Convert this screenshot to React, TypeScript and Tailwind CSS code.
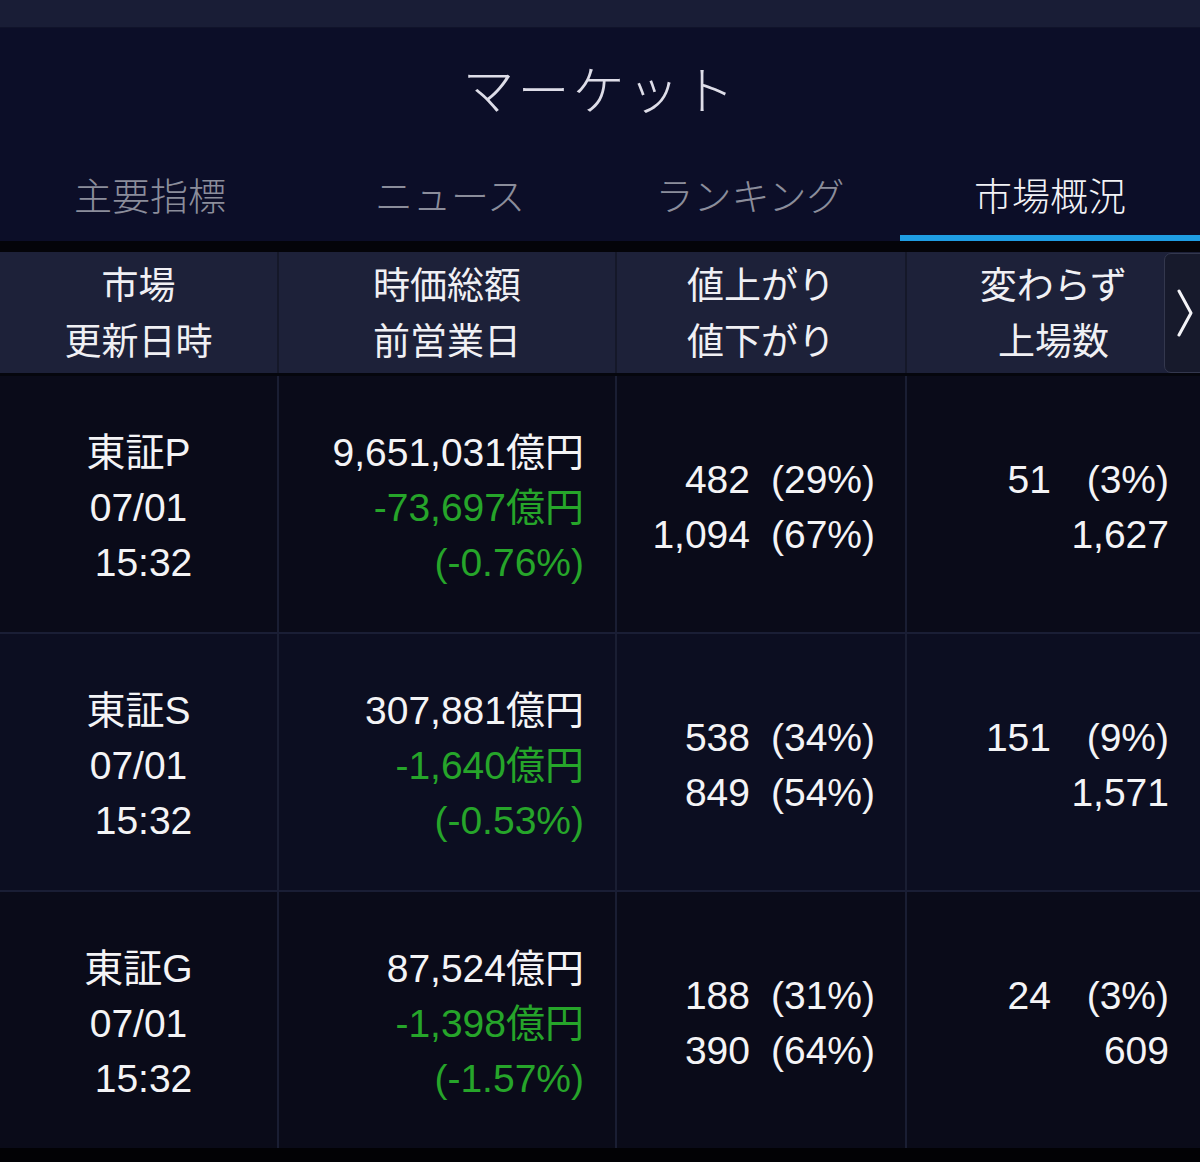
import React from 'react';

const jp = { fontFamily: '"Noto Sans CJK JP", sans-serif' };
const num = { fontFamily: '"Liberation Sans", "Noto Sans CJK JP", sans-serif' };

const tabs = ['主要指標', 'ニュース', 'ランキング', '市場概況'];

const rows = [
  {
    name: '東証P',
    cap: '9,651,031億円',
    diff: '-73,697億円',
    pct: '(-0.76%)',
    up: ['482', '(29%)'],
    down: ['1,094', '(67%)'],
    flat: ['51', '(3%)'],
    listed: '1,627',
    bg: 'bg-[#0a0b19]',
  },
  {
    name: '東証S',
    cap: '307,881億円',
    diff: '-1,640億円',
    pct: '(-0.53%)',
    up: ['538', '(34%)'],
    down: ['849', '(54%)'],
    flat: ['151', '(9%)'],
    listed: '1,571',
    bg: 'bg-[#0c0e21]',
  },
  {
    name: '東証G',
    cap: '87,524億円',
    diff: '-1,398億円',
    pct: '(-1.57%)',
    up: ['188', '(31%)'],
    down: ['390', '(64%)'],
    flat: ['24', '(3%)'],
    listed: '609',
    bg: 'bg-[#0a0b19]',
  },
];

const App: React.FC = () => {
  return (
    <div className="w-[1200px] h-[1162px] bg-black overflow-hidden flex flex-col">
      {/* status strip */}
      <div className="h-[28px] bg-[#191d36] border-b border-[#10132a]" />

      {/* title + tabs */}
      <div className="bg-[#0c0e28]">
        <div className="h-[120px] flex items-center justify-center">
          <h1 className="text-[52px] font-light tracking-[3px] text-[#dedde8]" style={jp}>
            マーケット
          </h1>
        </div>
        <div className="grid grid-cols-4 h-[93px]">
          {tabs.map((t, i) => (
            <div key={t} className="flex flex-col">
              <div
                className={`flex-1 flex items-center justify-center pt-[4px] text-[38px] font-light ${
                  i === 3 ? 'text-[#f2f2f6]' : 'text-[#8b8d9b]'
                }`}
                style={jp}
              >
                {t}
              </div>
              <div className={`h-[6px] ${i === 3 ? 'bg-[#1f9de3]' : 'bg-[#0c0e28]'}`} />
            </div>
          ))}
        </div>
      </div>

      <div className="h-[11px] bg-[#040409]" />

      {/* column header */}
      <div className="relative h-[121px] bg-[#1d2139] grid grid-cols-[279px_338px_290px_293px] text-[37px] text-[#f0f0f4] leading-[56px]" style={jp}>
        <div className="flex flex-col items-center justify-center pb-[4px] border-r-2 border-[#151829]">
          <span>市場</span>
          <span>更新日時</span>
        </div>
        <div className="flex flex-col items-center justify-center pb-[4px] border-r-2 border-[#151829]">
          <span>時価総額</span>
          <span>前営業日</span>
        </div>
        <div className="flex flex-col items-center justify-center pb-[4px] border-r-2 border-[#151829]">
          <span>値上がり</span>
          <span>値下がり</span>
        </div>
        <div className="flex flex-col items-center justify-center pb-[4px]">
          <span>変わらず</span>
          <span>上場数</span>
        </div>
        <div className="absolute left-[1164px] top-[1px] w-[44px] h-[120px] rounded-l-[7px] border border-[#34384e] bg-[#171a2c] flex items-center pl-[12px]">
          <svg width="16" height="48" viewBox="0 0 16 48" fill="none">
            <path d="M2 2 L14 24 L2 46" stroke="#f4f4f8" strokeWidth="3" strokeLinecap="round" strokeLinejoin="round" />
          </svg>
        </div>
      </div>

      <div className="h-[3px] bg-[#05060d]" />

      {/* data rows */}
      <div className="flex flex-col gap-[2px] bg-[#1a1e35]">
        {rows.map((r) => (
          <div
            key={r.name}
            className={`h-[256px] grid grid-cols-[279px_338px_290px_293px] text-[39px] leading-[55px] text-[#f4f4f6] ${r.bg}`}
            style={num}
          >
            <div className="flex flex-col justify-center items-center border-r-2 border-[#1a1e33] pt-[6px]">
              <span>{r.name}</span>
              <span>07/01</span>
              <span className="pl-[10px]">15:32</span>
            </div>
            <div className="flex flex-col justify-center items-end pr-[31px] border-r-2 border-[#1a1e33] pt-[6px]">
              <span>{r.cap}</span>
              <span className="text-[#26a52a]">{r.diff}</span>
              <span className="text-[#26a52a]">{r.pct}</span>
            </div>
            <div className="flex flex-col justify-center items-end pr-[30px] border-r-2 border-[#1a1e33] pt-[6px]">
              {[r.up, r.down].map((v, i) => (
                <div key={i} className="flex">
                  <span>{v[0]}</span>
                  <span className="w-[125px] text-right">{v[1]}</span>
                </div>
              ))}
            </div>
            <div className="flex flex-col justify-center items-end pr-[31px] pt-[6px]">
              <div className="flex">
                <span>{r.flat[0]}</span>
                <span className="w-[118px] text-right">{r.flat[1]}</span>
              </div>
              <span>{r.listed}</span>
            </div>
          </div>
        ))}
      </div>

      <div className="flex-1 bg-[#020205]" />
    </div>
  );
};

export default App;
